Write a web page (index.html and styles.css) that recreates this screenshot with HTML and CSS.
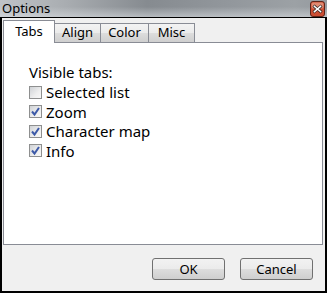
FILE: index.html
```html
<!DOCTYPE html>
<html lang="en">

<head>
    <meta charset="utf-8">
    <title>Options</title>
    <link rel="stylesheet" href="styles.css">
</head>

<body>
    <div class="window">
        <header class="titlebar">
            <span class="title">Options</span>
            <svg class="close" width="15" height="16" viewBox="0 0 15 16">
                <rect x="0.5" y="0.5" width="14" height="15" rx="2.5" fill="#cc4e33" stroke="#5e2418" />
                <rect x="1.5" y="1.5" width="12" height="6" rx="1.5" fill="#e08a72" />
                <path d="M4.5 5.5 L10.5 10.5 M10.5 5.5 L4.5 10.5" stroke="#3b2a26" stroke-width="3" stroke-linecap="square" />
                <path d="M4.5 5.5 L10.5 10.5 M10.5 5.5 L4.5 10.5" stroke="#ffffff" stroke-width="1.6" stroke-linecap="square" />
            </svg>
        </header>
        <div class="client">
            <nav class="tabs">
                <span class="tab valgt">Tabs</span>
                <span class="tab">Align</span>
                <span class="tab">Color</span>
                <span class="tab">Misc</span>
            </nav>
            <section class="pane">
                <p class="label">Visible tabs:</p>
                <label class="row"><span class="box"></span>Selected list</label>
                <label class="row"><span class="box"><svg width="11" height="11" viewBox="0 0 11 11"><path d="M2 5.5 L4.5 8.5 L9 2" fill="none" stroke="#3d5aa8" stroke-width="2" /></svg></span>Zoom</label>
                <label class="row"><span class="box"><svg width="11" height="11" viewBox="0 0 11 11"><path d="M2 5.5 L4.5 8.5 L9 2" fill="none" stroke="#3d5aa8" stroke-width="2" /></svg></span>Character map</label>
                <label class="row"><span class="box"><svg width="11" height="11" viewBox="0 0 11 11"><path d="M2 5.5 L4.5 8.5 L9 2" fill="none" stroke="#3d5aa8" stroke-width="2" /></svg></span>Info</label>
            </section>
            <div class="knapper">
                <button class="knap">OK</button>
                <button class="knap">Cancel</button>
            </div>
        </div>
    </div>
</body>

</html>
```

FILE: styles.css
```css
* {
    box-sizing: border-box;
}

body {
    margin: 0;
    background-color: #f0f0f0;
    font-family: 'Noto Sans', 'Open Sans', sans-serif;
}

.window {
    width: 327px;
    height: 293px;
    display: flex;
    flex-direction: column;
}

/*Title bar*/
.titlebar {
    height: 17px;
    display: flex;
    align-items: center;
    justify-content: space-between;
    padding: 0 2px 0 2px;
    background:
        linear-gradient(to bottom, rgba(255, 255, 255, 0) 40%, rgba(215, 219, 223, 0.6) 100%),
        linear-gradient(to right, #bfc3c7 0%, #a9adb1 20%, #868b90 45%, #92979c 70%, #9ca1a5 90%, #959a9f 100%);
}

.title {
    font-size: 13px;
    color: #000;
    line-height: 17px;
}

.close {
    flex: 0 0 15px;
    margin-top: 1px;
}

/*Client area*/
.client {
    flex: 1;
    border: 2px solid #000;
    border-top-width: 1px;
    padding: 2px 2px 0 1px;
    display: flex;
    flex-direction: column;
}

.tabs {
    display: flex;
    align-items: flex-end;
    height: 22px;
}

.tab {
    height: 19px;
    border: 1px solid #898c95;
    border-bottom: none;
    margin-left: -1px;
    background: linear-gradient(to bottom, #f3f3f3 0%, #ebebeb 50%, #dddddd 51%, #cfcfcf 100%);
    font-size: 13px;
    line-height: 17px;
    text-align: center;
}

.tab:nth-child(2) {
    width: 47px;
}

.tab:nth-child(3) {
    width: 49px;
}

.tab:nth-child(4) {
    width: 47px;
}

.tab.valgt {
    margin-left: 0;
    width: 52px;
    height: 23px;
    margin-bottom: -1px;
    background: #fff;
    position: relative;
    z-index: 1;
    line-height: 21px;
}

.pane {
    height: 203px;
    background-color: #fff;
    border: 1px solid #898c95;
    padding: 20px 0 0 25px;
    font-size: 15px;
}

.label {
    margin: 0;
    line-height: 19.5px;
}

.row {
    display: flex;
    align-items: center;
    height: 19.5px;
}

.box {
    width: 13px;
    height: 13px;
    margin-right: 4px;
    border: 1px solid #8e8f8f;
    background: linear-gradient(135deg, #cfd2d6 0%, #eeeeee 60%, #f8f8f8 100%);
    display: flex;
    align-items: center;
    justify-content: center;
}

/*Buttons*/
.knapper {
    display: flex;
    justify-content: flex-end;
    gap: 15px;
    padding: 13px 10px 0 0;
}

.knap {
    width: 73px;
    height: 22px;
    border: 1px solid #707070;
    border-radius: 3px;
    background: linear-gradient(to bottom, #f2f2f2 0%, #ebebeb 50%, #dddddd 51%, #cfcfcf 100%);
    font-family: 'Noto Sans', 'Open Sans', sans-serif;
    font-size: 13px;
    color: #000;
    padding: 0;
}
```
